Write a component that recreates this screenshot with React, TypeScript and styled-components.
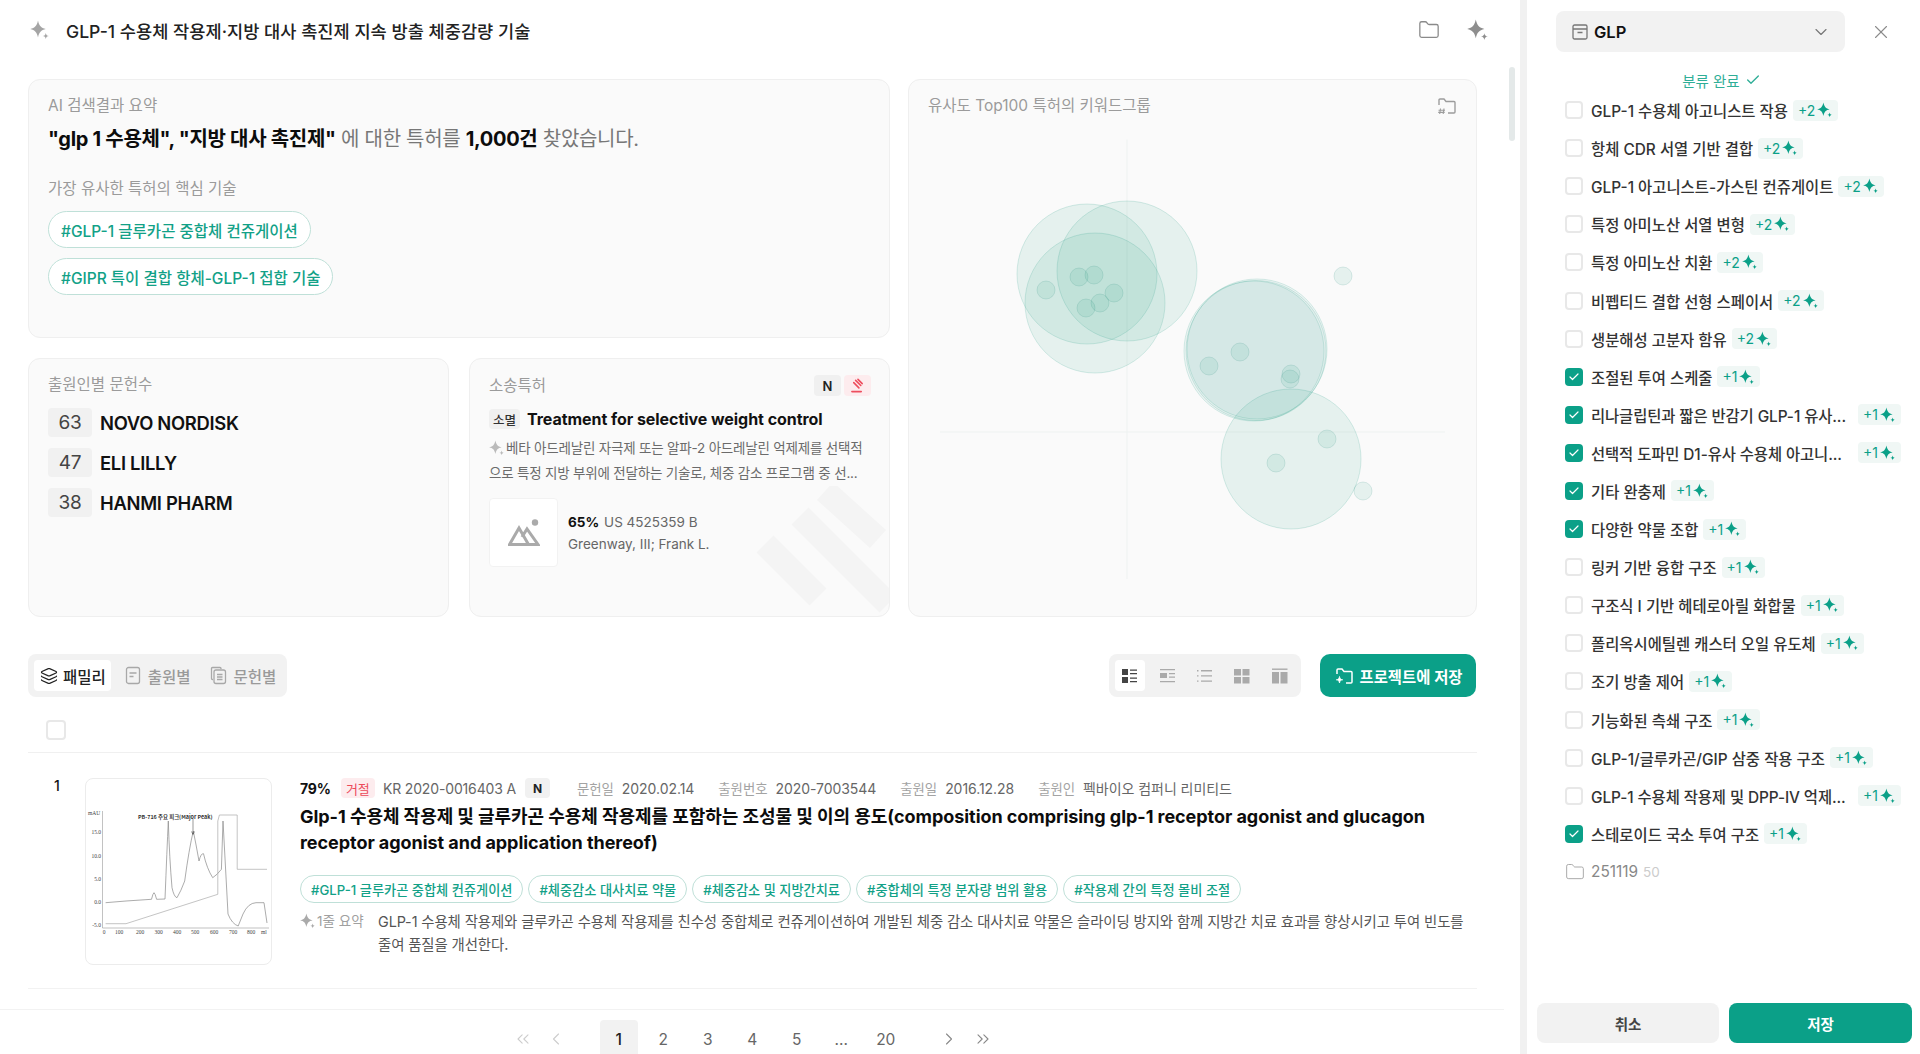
import React from "react";
import styled, { createGlobalStyle } from "styled-components";
import { Check, ChevronDown, ChevronLeft, ChevronRight, ChevronsLeft, ChevronsRight, Folder, Layers, X } from "lucide-react";

const GREEN = "#0ba088";

const GlobalStyle = createGlobalStyle`
  html, body { margin: 0; padding: 0; background: #fff; }
  body {
    font-family: "Inter", "Noto Sans CJK KR", sans-serif;
    color: #111;
    overflow: hidden;
  }
  * { box-sizing: border-box; }
`;

const Page = styled.div`
  display: flex;
  width: 1920px;
  height: 1054px;
  overflow: hidden;
`;

const Main = styled.main`
  position: relative;
  width: 1520px;
  height: 1054px;
  display: flex;
  flex-direction: column;
`;

const ScrollThumb = styled.div`
  position: absolute;
  left: 1509px;
  top: 67px;
  width: 6px;
  height: 74px;
  border-radius: 3px;
  background: #e4e9e9;
`;

const Divider = styled.div`
  width: 7px;
  background: #f1f1f1;
`;

const Content = styled.div`
  flex: 1;
  min-height: 0;
  padding: 0 43px 0 28px;
`;

const TitleBar = styled.header`
  height: 60px;
  display: flex;
  align-items: center;
  gap: 16px;
  padding-left: 2px;
`;

const PageTitle = styled.h1`
  flex: 1;
  margin: 0;
  font-size: 17.6px;
  font-weight: 500;
  color: #222;
`;

const TitleActions = styled.div`
  display: flex;
  align-items: center;
  gap: 27px;
  color: #8a8a8a;
  margin-right: -12px;
`;

const Dashboard = styled.section`
  display: grid;
  grid-template-columns: 862px 569px;
  gap: 18px;
  margin-top: 19px;
  height: 538px;
`;

const LeftStack = styled.div`
  display: grid;
  grid-template-rows: 259px 259px;
  row-gap: 20px;
`;

const LowerCards = styled.div`
  display: grid;
  grid-template-columns: 421px 421px;
  column-gap: 20px;
`;

const Card = styled.div`
  position: relative;
  overflow: hidden;
  background: #fafafa;
  border: 1px solid #efefef;
  border-radius: 12px;
  padding: 16px 19px;
`;

const CardLabel = styled.div`
  font-size: 15.5px;
  line-height: 20px;
  color: #9b9b9b;
`;

const Headline = styled.p`
  margin: 10px 0 0;
  font-size: 20px;
  line-height: 26px;
  letter-spacing: -0.3px;
  color: #777;
  b { color: #0c0c0c; font-weight: 700; }
`;

const SubLabel = styled(CardLabel)`
  margin-top: 27px;
`;

const HashStack = styled.div`
  display: flex;
  flex-direction: column;
  align-items: flex-start;
  gap: 10px;
  margin-top: 12px;
`;

const HashTag = styled.span<{ $small?: boolean }>`
  display: inline-flex;
  align-items: center;
  height: ${(p) => (p.$small ? "28px" : "37px")};
  padding: 0 ${(p) => (p.$small ? "10px" : "12px")};
  border: 1px solid #bfe0d8;
  border-radius: 19px;
  background: #fff;
  color: #12a187;
  font-size: ${(p) => (p.$small ? "13.2px" : "15.5px")};
  font-weight: 500;
  white-space: nowrap;
`;

const ApplicantList = styled.div`
  display: flex;
  flex-direction: column;
  gap: 11px;
  margin-top: 13px;
`;

const ApplicantRow = styled.div`
  display: flex;
  align-items: center;
  gap: 8px;
  font-size: 18.4px;
  font-weight: 600;
  letter-spacing: -0.3px;
`;

const CountBox = styled.span`
  width: 44px;
  height: 29px;
  display: flex;
  align-items: center;
  justify-content: center;
  border-radius: 4px;
  background: #f1f1f1;
  font-size: 19px;
  font-weight: 400;
  color: #444;
`;

const CardHead = styled.div`
  display: flex;
  align-items: center;
  justify-content: space-between;
`;

const Flags = styled.div`
  display: flex;
  gap: 3px;
  margin-right: -1px;
`;

const Flag = styled.span<{ $red?: boolean }>`
  width: 27px;
  height: 21px;
  display: flex;
  align-items: center;
  justify-content: center;
  border-radius: 4px;
  background: ${(p) => (p.$red ? "#fdecee" : "#f0f0f0")};
  color: #222;
  font-size: 13px;
  font-weight: 600;
`;

const LitigationTitle = styled.div`
  display: flex;
  align-items: center;
  gap: 7px;
  margin-top: 13px;
  font-size: 16px;
  font-weight: 700;
  letter-spacing: -0.05px;
`;

const StatusChip = styled.span`
  width: 31px;
  height: 20px;
  display: flex;
  align-items: center;
  justify-content: center;
  border-radius: 4px;
  background: #f0f0f0;
  font-size: 12.5px;
  font-weight: 500;
  color: #333;
`;

const Blurb = styled.p`
  position: relative;
  margin: 7px 0 0;
  font-size: 13.5px;
  line-height: 25px;
  color: #6b6b6b;
  letter-spacing: -0.2px;
  svg { vertical-align: -3px; margin-right: 1px; }
`;

const PriorArt = styled.div`
  position: relative;
  display: flex;
  align-items: center;
  gap: 10px;
  margin-top: 12px;
`;

const PlaceholderImage = styled.div`
  width: 69px;
  height: 69px;
  display: flex;
  align-items: center;
  justify-content: center;
  background: #fff;
  border: 1px solid #f2f2f2;
  border-radius: 4px;
`;

const PriorInfo = styled.div`
  font-size: 13.5px;
  line-height: 22px;
  color: #666;
  b { color: #111; font-weight: 700; margin-right: 5px; }
`;

const Watermark = styled.svg`
  position: absolute;
  right: 0;
  bottom: 0;
`;

const ChartHead = styled(CardHead)`
  padding-right: 0;
`;

const ChartCard = styled(Card)`
  padding: 16px 0 0;
  ${ChartHead} { padding: 0 19px; }
`;

const ChartSvg = styled.svg`
  display: block;
  margin-top: 4px;
`;

const Toolbar = styled.div`
  display: flex;
  align-items: center;
  justify-content: space-between;
  height: 43px;
  margin: 37px 1px 0 0;
`;

const Segmented = styled.div`
  display: flex;
  align-items: center;
  height: 43px;
  padding: 0 6px;
  border-radius: 8px;
  background: #f2f2f2;
`;

const TabButton = styled.div<{ $active?: boolean }>`
  height: 31px;
  display: flex;
  align-items: center;
  gap: ${(p) => (p.$active ? "5px" : "7px")};
  padding: 0 5px 0 6px;
  border-radius: 4px;
  font-size: 15.5px;
  font-weight: 500;
  color: ${(p) => (p.$active ? "#222" : "#9a9a9a")};
  background: ${(p) => (p.$active ? "#fff" : "transparent")};
  & + & { margin-left: 8px; }
`;

const ToolbarRight = styled.div`
  display: flex;
  align-items: center;
  gap: 19px;
`;

const ViewGroup = styled(Segmented)`
  width: 192px;
  gap: 7px;
`;

const ViewButton = styled.div<{ $active?: boolean }>`
  width: 31px;
  height: 31px;
  display: flex;
  align-items: center;
  justify-content: center;
  border-radius: 4px;
  background: ${(p) => (p.$active ? "#fff" : "transparent")};
  color: ${(p) => (p.$active ? "#444" : "#aaa")};
`;

const SaveButton = styled.div`
  width: 156px;
  height: 43px;
  display: flex;
  align-items: center;
  justify-content: center;
  gap: 6px;
  border-radius: 10px;
  background: ${GREEN};
  color: #fff;
  font-size: 15.4px;
  font-weight: 600;
`;

const SelectRow = styled.div`
  height: 56px;
  display: flex;
  align-items: center;
  padding: 10px 0 0 18px;
  border-bottom: 1px solid #f0f0f0;
`;

const Box = styled.span<{ $checked?: boolean; $large?: boolean }>`
  flex: none;
  width: ${(p) => (p.$large ? "20px" : "18px")};
  height: ${(p) => (p.$large ? "20px" : "18px")};
  display: inline-flex;
  align-items: center;
  justify-content: center;
  border-radius: 4px;
  border: ${(p) => (p.$checked ? "none" : "2px solid #e8e8e8")};
  background: ${(p) => (p.$checked ? GREEN : "#fff")};
  color: #fff;
`;

const ResultRow = styled.article`
  display: flex;
  height: 236px;
  padding-top: 25px;
  border-bottom: 1px solid #f2f2f2;
`;

const RowNumber = styled.div`
  width: 57px;
  padding-left: 26px;
  font-size: 14px;
  font-weight: 500;
  line-height: 16px;
`;

const Thumb = styled.div`
  flex: none;
  width: 187px;
  height: 187px;
  border: 1px solid #ececec;
  border-radius: 8px;
  background: #fff;
`;

const ResultBody = styled.div`
  flex: 1;
  min-width: 0;
  padding-left: 28px;
`;

const MetaRow = styled.div`
  display: flex;
  align-items: center;
  height: 20px;
  font-size: 14px;
  color: #666;
  letter-spacing: -0.15px;
  white-space: nowrap;
`;

const Percent = styled.b`
  color: #111;
  font-size: 14px;
  font-weight: 700;
  margin-right: 10px;
`;

const RejectChip = styled.span`
  width: 34px;
  height: 20px;
  display: flex;
  align-items: center;
  justify-content: center;
  border-radius: 4px;
  background: #fdecee;
  color: #ec4a5a;
  font-size: 13px;
  margin-right: 8px;
`;

const NChip = styled.span`
  width: 25px;
  height: 20px;
  display: flex;
  align-items: center;
  justify-content: center;
  border-radius: 4px;
  background: #f1f1f1;
  color: #222;
  font-size: 12px;
  font-weight: 700;
  margin: 0 27px 0 9px;
`;

const MetaField = styled.span`
  margin-right: 24px;
  font-size: 14px;
  letter-spacing: -0.05px;
  i { font-style: normal; font-size: 13.4px; color: #a3a3a3; margin-right: 8px; }
`;

const ResultTitle = styled.h2`
  margin: 6px 0 0;
  font-size: 18px;
  line-height: 25.5px;
  font-weight: 700;
  letter-spacing: -0.05px;
  color: #0c0c0c;
`;

const TagRow = styled.div`
  display: flex;
  gap: 5px;
  margin-top: 20px;
`;

const SummaryRow = styled.div`
  display: flex;
  margin-top: 7px;
`;

const SummaryLabel = styled.div`
  flex: none;
  width: 78px;
  display: flex;
  gap: 1px;
  font-size: 13.5px;
  line-height: 23px;
  color: #a0a0a0;
  svg { margin-top: 3px; }
`;

const SummaryText = styled.p`
  margin: 0;
  font-size: 14.4px;
  line-height: 23px;
  color: #555;
  letter-spacing: -0.1px;
`;

const Pagination = styled.nav`
  height: 45px;
  width: 1504px;
  display: flex;
  align-items: flex-end;
  justify-content: center;
  border-top: 1px solid #f2f2f2;
  position: relative;
`;

const PagerInner = styled.div`
  display: flex;
  align-items: center;
  height: 34px;
  color: #666;
  font-size: 15.5px;
  margin-left: 2px;
`;

const PagerArrow = styled.span<{ $muted?: boolean; $gap?: number; $lead?: number }>`
  width: 20px;
  display: flex;
  justify-content: center;
  padding-top: 3px;
  color: ${(p) => (p.$muted ? "#cdcdcd" : "#888")};
  margin-right: ${(p) => p.$gap ?? 0}px;
  margin-left: ${(p) => p.$lead ?? 0}px;
`;

const PageNum = styled.span<{ $active?: boolean }>`
  width: 38px;
  height: 34px;
  display: flex;
  align-items: center;
  justify-content: center;
  padding-top: 4px;
  margin-right: 6.5px;
  border-radius: 4px 4px 0 0;
  background: ${(p) => (p.$active ? "#f2f2f2" : "transparent")};
  color: ${(p) => (p.$active ? "#222" : "#666")};
  font-weight: ${(p) => (p.$active ? 500 : 400)};
`;

const Sidebar = styled.aside`
  flex: 1;
  display: flex;
  flex-direction: column;
  padding-top: 11px;
`;

const SidebarHead = styled.div`
  display: flex;
  align-items: center;
  padding-left: 29px;
`;

const PickBox = styled.div`
  width: 289px;
  height: 41px;
  display: flex;
  align-items: center;
  gap: 6px;
  padding: 0 14px 0 16px;
  border-radius: 8px;
  background: #f2f2f2;
  font-size: 16.5px;
  font-weight: 600;
  span { flex: 1; }
`;

const CloseBtn = styled.div`
  display: flex;
  margin-left: 25px;
  color: #8b8b8b;
`;

const ClassifyState = styled.div`
  display: flex;
  align-items: center;
  justify-content: center;
  gap: 5px;
  height: 20px;
  margin-top: 18px;
  padding-right: 4px;
  font-size: 14.5px;
  color: #2fae97;
`;

const KeywordList = styled.ul`
  flex: 1;
  list-style: none;
  margin: 1px 0 0;
  padding: 0 0 0 38px;
`;

const KeywordItem = styled.li`
  display: flex;
  align-items: center;
  gap: 8px;
  width: 338px;
  height: 38.1px;
`;

const KeywordText = styled.span<{ $cut?: boolean }>`
  flex: none;
  width: ${(p) => (p.$cut ? "262px" : "auto")};
  white-space: nowrap;
  font-size: 15.4px;
  font-weight: 500;
  color: #333;
  letter-spacing: ${(p) => (p.$cut ? "-0.1px" : "0")};
`;

const AiBadge = styled.span`
  flex: none;
  height: 21px;
  display: flex;
  align-items: center;
  gap: 2px;
  margin-left: -3px;
  padding: 0 5px;
  border-radius: 4px;
  background: #f0f7f5;
  color: ${GREEN};
  font-size: 14px;
`;

const FolderName = styled.span`
  margin-left: -2px;
  font-size: 15.4px;
  color: #888;
  small { font-size: 13.5px; color: #ccc; margin-left: 5px; }
`;

const FooterBar = styled.div`
  display: grid;
  grid-template-columns: 182px 183px;
  gap: 10px;
  padding: 0 8px 11px 10px;
`;

const FooterButton = styled.div<{ $primary?: boolean }>`
  height: 40px;
  display: flex;
  align-items: center;
  justify-content: center;
  border-radius: 8px;
  background: ${(p) => (p.$primary ? GREEN : "#f2f2f2")};
  color: ${(p) => (p.$primary ? "#fff" : "#444")};
  font-size: 14.5px;
  font-weight: 600;
`;

const Sparkle = ({ size = 18, color = "#999" }: { size?: number; color?: string }) => (
  <svg width={size} height={size} viewBox="0 0 20 20" fill={color}>
    <path d="M8 .5C9.2 6 11 7.8 15.8 9C11 10.2 9.2 12 8 17.5C6.8 12 5 10.2 .2 9C5 7.8 6.8 6 8 .5Z" />
    <path d="M15.8 13C16.2 15 16.9 15.7 19 16C16.9 16.3 16.2 17 15.8 19C15.4 17 14.7 16.3 12.6 16C14.7 15.7 15.4 15 15.8 13Z" />
  </svg>
);

const HashFolder = () => (
  <svg width="20" height="20" viewBox="0 0 20 20" fill="none" stroke="#9c9c9c" strokeWidth="1.4">
    <path d="M2 9V4a1 1 0 0 1 1-1h4l2 2.5h8a1 1 0 0 1 1 1V16a1 1 0 0 1-1 1h-6" />
    <path d="M3.5 12.5l-.8 5.5M7 12.5L6.2 18M1.5 14.2h6.5M1.2 16.4h6.5" strokeWidth="1.1" />
  </svg>
);

const Gavel = () => (
  <svg width="15" height="15" viewBox="0 0 16 16" fill="none" stroke="#ee4e5e" strokeWidth="1.7" strokeLinecap="round">
    <path d="M6 2.5l5.5 5.5M4 5l5.5 5.5M8.5 1.5l4.5 4.5M2 14.5h10" />
  </svg>
);

const Mountain = () => (
  <svg width="32" height="27" viewBox="0 0 32 27" fill="none" stroke="#aaa" strokeWidth="3">
    <path d="M1.5 25.5L11 9l9.5 16.5zM14 18l5-8 11 15.5H14" strokeLinejoin="miter" />
    <circle cx="27" cy="3.5" r="3.2" fill="#aaa" stroke="none" />
  </svg>
);

const DocIcon = () => (
  <svg width="16" height="19" viewBox="0 0 16 19" fill="none" stroke="#a8a8a8" strokeWidth="1.3">
    <rect x="1.5" y="1.5" width="13" height="16" rx="2" />
    <path d="M4.5 7h7M4.5 10.5h4" />
  </svg>
);

const DocsIcon = () => (
  <svg width="17" height="19" viewBox="0 0 17 19" fill="none" stroke="#a8a8a8" strokeWidth="1.3">
    <path d="M3 13.5H2.5a1 1 0 0 1-1-1V2.5a1 1 0 0 1 1-1H10a1 1 0 0 1 1 1V3" />
    <rect x="4" y="4" width="11.5" height="13.5" rx="2" />
    <path d="M7 8.5h5.5M7 11h5.5M7 13.5h5.5" />
  </svg>
);

const ArchiveIcon = () => (
  <svg width="16" height="16" viewBox="0 0 16 16" fill="none" stroke="#777" strokeWidth="1.3">
    <rect x="1" y="1" width="14" height="14" rx="1.5" />
    <path d="M1 5h14M5.5 8.5h5" />
  </svg>
);

const FolderPlus = () => (
  <svg width="20" height="20" viewBox="0 0 20 20" fill="none" stroke="#fff" strokeWidth="1.5">
    <path d="M3 8V4a1 1 0 0 1 1-1h4l2 2.5h7a1 1 0 0 1 1 1V16a1 1 0 0 1-1 1h-5" />
    <path d="M5.5 10.5c.3 2.2 1.1 3 3.2 3.3-2.1.3-2.9 1.1-3.2 3.2-.3-2.1-1.1-2.9-3.2-3.2 2.1-.3 2.9-1.1 3.2-3.3z" fill="#fff" strokeWidth="0.8" />
  </svg>
);

const viewPaths = [
  <g key="0" fill="currentColor">
    <rect x="0" y="1" width="6" height="6" /><rect x="0" y="9" width="6" height="6" />
    <path d="M8 1.5h7v1.3H8zM8 5h7v1.3H8zM8 9.5h7v1.3H8zM8 13h7v1.3H8z" />
  </g>,
  <g key="1" fill="currentColor">
    <path d="M0 1h15v1.3H0zM0 13h15v1.3H0z" />
    <rect x="0" y="5" width="7" height="5" />
    <path d="M9 5h6v1.2H9zM9 8.5h6v1.2H9z" />
  </g>,
  <g key="2" fill="currentColor">
    <path d="M0 2h1.5v1.4H0zM4 2h11v1.4H4zM0 7.2h1.5v1.4H0zM4 7.2h11v1.4H4zM0 12.4h1.5v1.4H0zM4 12.4h11v1.4H4z" />
  </g>,
  <g key="3" fill="currentColor">
    <rect x="0" y="1" width="7" height="6.5" /><rect x="8.5" y="1" width="7" height="6.5" />
    <rect x="0" y="9" width="7" height="6.5" /><rect x="8.5" y="9" width="7" height="6.5" />
  </g>,
  <g key="4" fill="currentColor">
    <path d="M0 0.5h15.5v1.4H0z" />
    <rect x="0" y="4" width="7" height="11.5" /><rect x="8.5" y="4" width="7" height="11.5" />
  </g>,
];

// cx, cy, fill alpha: the middle group is three near-identical circles, so each stays fainter
const bigCircles = [
  [1087, 274, 0.09],
  [1127, 271, 0.09],
  [1095, 303, 0.09],
  [1256, 350.5, 0.055],
  [1257, 349, 0.055],
  [1254, 351, 0.055],
  [1291, 459, 0.09],
];

const smallCircles = [
  [1046, 290],
  [1079, 277],
  [1094, 275],
  [1114, 293],
  [1100, 303],
  [1086, 308],
  [1209, 366],
  [1240, 352],
  [1291, 374],
  [1290, 379],
  [1327, 439],
  [1276, 463],
  [1343, 276],
  [1363, 491],
];

const ClusterChart = () => (
  <ChartSvg width="567" height="496" viewBox="909 120 567 496">
    <path d="M1127 139.5V579M940 432H1445" stroke="#eef2f1" strokeWidth="1" fill="none" />
    {bigCircles.map(([cx, cy, a], i) => (
      <circle key={i} cx={cx} cy={cy} r="70" fill={`rgba(20,150,125,${a})`} stroke="rgba(20,150,125,0.16)" />
    ))}
    {smallCircles.map(([cx, cy], i) => (
      <circle key={i} cx={cx} cy={cy} r="9" fill="rgba(20,150,125,0.09)" stroke="rgba(20,130,110,0.14)" />
    ))}
  </ChartSvg>
);

const xTicks: [string, number][] = [
  ["0", 18], ["100", 33], ["200", 54], ["300", 72.6], ["400", 91],
  ["500", 109], ["600", 128], ["700", 147], ["800", 165], ["ml", 178],
];
const yTicks: [string, number][] = [["15.0", 55], ["10.0", 78.5], ["5.0", 101.5], ["0.0", 124.5], ["-5.0", 148]];

const Chromatogram = () => (
  <svg width="185" height="185" viewBox="0 0 185 185" fontFamily="'Liberation Serif', serif" fontSize="5.5" fill="#444">
    <path d="M16.5 32V149H183" fill="none" stroke="#999" strokeWidth="0.6" />
    <path
      d="M19.6 123.7L40 122L65.5 120.3Q67 114 68 113.7Q69 114 70.6 120.3L79 120Q81 70 82.3 42Q83.5 80 86 108.7Q88 118 91 118.7Q95 112 98.7 102Q103 70 107.3 52Q110 65 113 82Q115 74 117.5 74.7Q121 90 126.7 98.7Q131 96 135.4 90.3L137 42L142 135Q146 145 152.2 147L157 135Q162 124 170 123.7L178 123.7L181 144"
      fill="none"
      stroke="#888"
      strokeWidth="0.7"
    />
    <path d="M19.6 144.7H40L131.8 115.3V42L133.4 36H151.2V90.3H181" fill="none" stroke="#aaa" strokeWidth="0.7" />
    <path d="M107 40V55M105.5 52.5L107 55.5L108.5 52.5" fill="none" stroke="#333" strokeWidth="0.5" />
    <text x="52" y="40" fontSize="5.4" fontWeight="700" fontFamily="'Noto Sans CJK KR', sans-serif" fill="#333">PB-716 주요 피크(Major Peak)</text>
    <text x="2" y="36">mAU</text>
    {yTicks.map(([label, y]) => (
      <text key={label} x="15" y={y} textAnchor="end">{label}</text>
    ))}
    {xTicks.map(([label, x]) => (
      <text key={label} x={x} y="155" textAnchor="middle">{label}</text>
    ))}
  </svg>
);

const keywords: [string, string, boolean][] = [
  ["GLP-1 수용체 아고니스트 작용", "+2", false],
  ["항체 CDR 서열 기반 결합", "+2", false],
  ["GLP-1 아고니스트-가스틴 컨쥬게이트", "+2", false],
  ["특정 아미노산 서열 변형", "+2", false],
  ["특정 아미노산 치환", "+2", false],
  ["비펩티드 결합 선형 스페이서", "+2", false],
  ["생분해성 고분자 함유", "+2", false],
  ["조절된 투여 스케줄", "+1", true],
  ["리나글립틴과 짧은 반감기 GLP-1 유사...", "+1", true],
  ["선택적 도파민 D1-유사 수용체 아고니...", "+1", true],
  ["기타 완충제", "+1", true],
  ["다양한 약물 조합", "+1", true],
  ["링커 기반 융합 구조", "+1", false],
  ["구조식 I 기반 헤테로아릴 화합물", "+1", false],
  ["폴리옥시에틸렌 캐스터 오일 유도체", "+1", false],
  ["조기 방출 제어", "+1", false],
  ["기능화된 측쇄 구조", "+1", false],
  ["GLP-1/글루카곤/GIP 삼중 작용 구조", "+1", false],
  ["GLP-1 수용체 작용제 및 DPP-IV 억제...", "+1", false],
  ["스테로이드 국소 투여 구조", "+1", true],
];

const resultTags = [
  "#GLP-1 글루카곤 중합체 컨쥬게이션",
  "#체중감소 대사치료 약물",
  "#체중감소 및 지방간치료",
  "#중합체의 특정 분자량 범위 활용",
  "#작용제 간의 특정 몰비 조절",
];

export default function App() {
  return (
    <Page>
      <GlobalStyle />
      <Main>
        <ScrollThumb />
        <Content>
          <TitleBar>
            <Sparkle size={20} color="#a5a5a5" />
            <PageTitle>GLP-1 수용체 작용제·지방 대사 촉진제 지속 방출 체중감량 기술</PageTitle>
            <TitleActions>
              <Folder size={22} strokeWidth={1.4} />
              <Sparkle size={22} color="#8e8e8e" />
            </TitleActions>
          </TitleBar>

          <Dashboard>
            <LeftStack>
              <Card>
                <CardLabel>AI 검색결과 요약</CardLabel>
                <Headline>
                  <b>"glp 1 수용체", "지방 대사 촉진제"</b> 에 대한 특허를 <b>1,000건</b> 찾았습니다.
                </Headline>
                <SubLabel>가장 유사한 특허의 핵심 기술</SubLabel>
                <HashStack>
                  <HashTag>#GLP-1 글루카곤 중합체 컨쥬게이션</HashTag>
                  <HashTag>#GIPR 특이 결합 항체-GLP-1 접합 기술</HashTag>
                </HashStack>
              </Card>
              <LowerCards>
                <Card>
                  <CardLabel>출원인별 문헌수</CardLabel>
                  <ApplicantList>
                    <ApplicantRow><CountBox>63</CountBox>NOVO NORDISK</ApplicantRow>
                    <ApplicantRow><CountBox>47</CountBox>ELI LILLY</ApplicantRow>
                    <ApplicantRow><CountBox>38</CountBox>HANMI PHARM</ApplicantRow>
                  </ApplicantList>
                </Card>
                <Card>
                  <Watermark width="140" height="130" viewBox="0 0 140 130" fill="none" stroke="#f4f4f4" strokeWidth="24">
                    <path d="M16 58L69 111M51 30L139 118M76 5L129 53" />
                  </Watermark>
                  <CardHead>
                    <CardLabel>소송특허</CardLabel>
                    <Flags>
                      <Flag>N</Flag>
                      <Flag $red><Gavel /></Flag>
                    </Flags>
                  </CardHead>
                  <LitigationTitle>
                    <StatusChip>소멸</StatusChip>
                    Treatment for selective weight control
                  </LitigationTitle>
                  <Blurb>
                    <Sparkle size={16} color="#bbb" />
                    베타 아드레날린 자극제 또는 알파-2 아드레날린 억제제를 선택적으로 특정 지방 부위에 전달하는 기술로, 체중 감소 프로그램 중 선...
                  </Blurb>
                  <PriorArt>
                    <PlaceholderImage><Mountain /></PlaceholderImage>
                    <PriorInfo>
                      <div><b>65%</b>US 4525359 B</div>
                      <div>Greenway, III; Frank L.</div>
                    </PriorInfo>
                  </PriorArt>
                </Card>
              </LowerCards>
            </LeftStack>
            <ChartCard>
              <ChartHead>
                <CardLabel>유사도 Top100 특허의 키워드그룹</CardLabel>
                <HashFolder />
              </ChartHead>
              <ClusterChart />
            </ChartCard>
          </Dashboard>

          <Toolbar>
            <Segmented>
              <TabButton $active><Layers size={18} strokeWidth={1.6} />패밀리</TabButton>
              <TabButton><DocIcon />출원별</TabButton>
              <TabButton><DocsIcon />문헌별</TabButton>
            </Segmented>
            <ToolbarRight>
              <ViewGroup>
                {viewPaths.map((icon, i) => (
                  <ViewButton key={i} $active={i === 0}>
                    <svg width="16" height="16" viewBox="0 0 16 16">{icon}</svg>
                  </ViewButton>
                ))}
              </ViewGroup>
              <SaveButton><FolderPlus />프로젝트에 저장</SaveButton>
            </ToolbarRight>
          </Toolbar>

          <SelectRow><Box $large /></SelectRow>

          <ResultRow>
            <RowNumber>1</RowNumber>
            <Thumb><Chromatogram /></Thumb>
            <ResultBody>
              <MetaRow>
                <Percent>79%</Percent>
                <RejectChip>거절</RejectChip>
                KR 2020-0016403 A
                <NChip>N</NChip>
                <MetaField><i>문헌일</i>2020.02.14</MetaField>
                <MetaField><i>출원번호</i>2020-7003544</MetaField>
                <MetaField><i>출원일</i>2016.12.28</MetaField>
                <MetaField><i>출원인</i>펙바이오 컴퍼니 리미티드</MetaField>
              </MetaRow>
              <ResultTitle>
                Glp-1 수용체 작용제 및 글루카곤 수용체 작용제를 포함하는 조성물 및 이의 용도(composition comprising glp-1 receptor agonist and glucagon receptor agonist and application thereof)
              </ResultTitle>
              <TagRow>
                {resultTags.map((t) => (
                  <HashTag key={t} $small>{t}</HashTag>
                ))}
              </TagRow>
              <SummaryRow>
                <SummaryLabel><Sparkle size={16} color="#aaa" />1줄 요약</SummaryLabel>
                <SummaryText>
                  GLP-1 수용체 작용제와 글루카곤 수용체 작용제를 친수성 중합체로 컨쥬게이션하여 개발된 체중 감소 대사치료 약물은 슬라이딩 방지와 함께 지방간 치료 효과를 향상시키고 투여 빈도를 줄여 품질을 개선한다.
                </SummaryText>
              </SummaryRow>
            </ResultBody>
          </ResultRow>
        </Content>

        <Pagination>
          <PagerInner>
            <PagerArrow $muted $gap={13}><ChevronsLeft size={22} strokeWidth={1.3} /></PagerArrow>
            <PagerArrow $muted $gap={34}><ChevronLeft size={22} strokeWidth={1.3} /></PagerArrow>
            <PageNum $active>1</PageNum>
            <PageNum>2</PageNum>
            <PageNum>3</PageNum>
            <PageNum>4</PageNum>
            <PageNum>5</PageNum>
            <PageNum>...</PageNum>
            <PageNum>20</PageNum>
            <PagerArrow $lead={28} $gap={14}><ChevronRight size={22} strokeWidth={1.3} /></PagerArrow>
            <PagerArrow><ChevronsRight size={22} strokeWidth={1.3} /></PagerArrow>
          </PagerInner>
        </Pagination>
      </Main>

      <Divider />

      <Sidebar>
        <SidebarHead>
          <PickBox>
            <ArchiveIcon />
            <span>GLP</span>
            <ChevronDown size={20} strokeWidth={1.4} color="#777" />
          </PickBox>
          <CloseBtn><X size={22} strokeWidth={1.2} /></CloseBtn>
        </SidebarHead>
        <ClassifyState>분류 완료 <Check size={16} strokeWidth={2} /></ClassifyState>
        <KeywordList>
          {keywords.map(([name, count, checked]) => (
            <KeywordItem key={name}>
              <Box $checked={checked}>{checked && <Check size={12} strokeWidth={2.4} />}</Box>
              <KeywordText $cut={name.endsWith("...")}>{name}</KeywordText>
              <AiBadge>{count}<Sparkle size={16} color={GREEN} /></AiBadge>
            </KeywordItem>
          ))}
          <KeywordItem>
            <Folder size={20} strokeWidth={1.2} color="#aaa" />
            <FolderName>251119<small>50</small></FolderName>
          </KeywordItem>
        </KeywordList>
        <FooterBar>
          <FooterButton>취소</FooterButton>
          <FooterButton $primary>저장</FooterButton>
        </FooterBar>
      </Sidebar>
    </Page>
  );
}
